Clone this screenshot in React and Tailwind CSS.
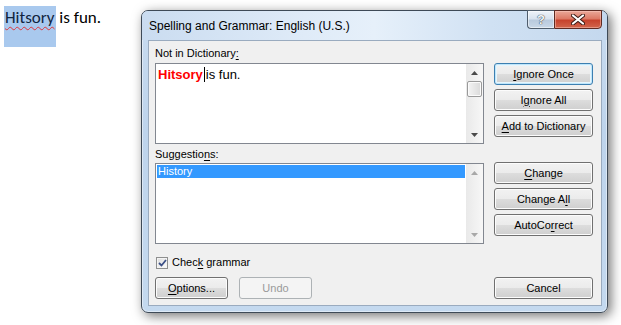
import React from 'react';

const ui = "font-['Segoe_UI','Liberation_Sans',Arial,sans-serif]";

const Button = ({ children, isDefault, disabled, className = '' }) => {
  const tone = disabled
    ? 'border-[#adb2b5] bg-[#f4f4f4] text-[#9a9a9a]'
    : isDefault
      ? 'border-[#3c7fb1] bg-[linear-gradient(#f2f2f2_0%,#ebebeb_50%,#dddddd_50%,#cfcfcf_100%)] text-black shadow-[inset_0_0_0_1px_#bfe6fb,inset_0_0_0_2px_#e6f5fd]'
      : 'border-[#707070] bg-[linear-gradient(#f2f2f2_0%,#ebebeb_50%,#dddddd_50%,#cfcfcf_100%)] text-black shadow-[inset_0_0_0_1px_#fcfcfc]';
  return (
    <div className={`h-[22px] flex items-center justify-center rounded-[3px] border text-[11px] leading-none ${tone} ${className}`}>
      {children}
    </div>
  );
};

const U = ({ children }) => <span className="underline underline-offset-[2px] decoration-1">{children}</span>;

const Arrow = ({ up, color }) => (
  <div className="h-[17px] flex items-center justify-center">
    <svg width="7" height="4" viewBox="0 0 7 4">
      <path d={up ? 'M0 4 L3.5 0 L7 4 Z' : 'M0 0 L7 0 L3.5 4 Z'} fill={color} />
    </svg>
  </div>
);

const ScrollBar = ({ thumb, disabled }) => {
  const color = disabled ? '#a8a8a8' : '#4a4a4a';
  return (
    <div className="w-[17px] h-full flex flex-col bg-[linear-gradient(90deg,#e9e9e9,#f7f7f7)]">
      <Arrow up color={color} />
      {thumb && (
        <div className="h-[16px] mx-px rounded-[2px] border border-[#9a9a9a] bg-[linear-gradient(90deg,#f4f4f4,#dadada)] shadow-[inset_0_0_0_1px_#fbfbfb]" />
      )}
      <div className="flex-1" />
      <Arrow color={color} />
    </div>
  );
};

export default function App() {
  return (
    <div className="w-[621px] h-[325px] bg-white flex overflow-hidden">
      {/* document text */}
      <div className="w-[141px] shrink-0 pl-[4px] pt-[6px] font-['Calibri','Liberation_Sans',sans-serif] text-[17px] leading-[18px] text-black">
        <span className="inline-block h-[41px] bg-[#a9c9ee] px-px pt-[3px] align-top text-[#10243e] underline decoration-wavy decoration-[#e0343a] decoration-1 underline-offset-[3px]">
          Hitsory
        </span>
        <span className="inline-block pt-[3px] align-top">&nbsp;is fun.</span>
      </div>

      {/* dialog window */}
      <div className={`${ui} mt-[10px] w-[467px] h-[303px] shrink-0 flex flex-col rounded-[7px] border border-[#3e4a57] bg-[linear-gradient(#c9dcf0,#bed4ec_40%,#c4d9ef)] shadow-[3px_3px_12px_rgba(0,0,0,0.55),inset_0_0_0_1px_rgba(255,255,255,0.45)]`}>
        {/* title bar */}
        <div className="h-[29px] flex justify-between rounded-t-[6px] bg-[linear-gradient(90deg,#cadcf0,#dfebf8_35%,#e6f0fa_50%,#d0e1f3_75%,#c4d8ee)]">
          <div className="self-center pl-[7px] text-[12px] text-black">Spelling and Grammar: English (U.S.)</div>
          <div className="flex mr-[5px] h-[19px] -mt-px">
            <div className="w-[27px] h-full flex items-center justify-center rounded-bl-[4px] border border-[#4f5d6c] border-r-0 bg-[linear-gradient(#eef3f9_0%,#d8e3ef_45%,#b9cadd_55%,#c9d8e8_100%)] shadow-[inset_0_0_0_1px_rgba(255,255,255,0.5)]">
              <span className="font-['Liberation_Sans',sans-serif] text-[13px] font-bold leading-none text-[#f4f6f8] [text-shadow:0_0_1px_#2c3540,0_0_1px_#2c3540]">?</span>
            </div>
            <div className="w-[48px] h-full flex items-center justify-center rounded-br-[4px] border border-[#5e2a22] bg-[linear-gradient(#eaa899_0%,#dd7a66_45%,#c7432d_55%,#d1654c_100%)] shadow-[inset_0_0_0_1px_rgba(255,210,200,0.45)]">
              <svg width="14" height="11" viewBox="0 0 14 11">
                <path d="M2 1.5 L12 9.5 M12 1.5 L2 9.5" stroke="#3a1a14" strokeWidth="4" strokeLinecap="round" />
                <path d="M2 1.5 L12 9.5 M12 1.5 L2 9.5" stroke="#ffffff" strokeWidth="2.2" strokeLinecap="round" />
              </svg>
            </div>
          </div>
        </div>

        {/* client area */}
        <div className="ml-[6px] mr-[5px] h-[266px] border border-[#9aabbf] bg-[#f0f0f0] pl-[6px] text-[11px] text-black">
          <div className="flex gap-[10px]">
            {/* left column */}
            <div className="w-[329px] flex flex-col">
              <div className="h-[22px] pt-[4px] leading-[16px]">
                Not in Dictionary<U>:</U>
              </div>
              <div className="h-[81px] flex border border-[#828790] bg-white">
                <div className="flex-1 pl-[2px] pt-[3px] font-['Liberation_Sans',Arial,sans-serif] text-[13px] leading-[16px]">
                  <span className="font-bold text-[#ff0000]">Hitsory</span>
                  <span className="inline-block w-px h-[15px] bg-black align-[-3px] mx-[1px]" />
                  <span>is fun.</span>
                </div>
                <ScrollBar thumb />
              </div>
              <div className="h-[19px] pt-[2px] leading-[16px]">
                Suggestio<U>n</U>s:
              </div>
              <div className="h-[81px] flex border border-[#828790] bg-white">
                <div className="flex-1 p-px">
                  <div className="h-[13px] bg-[#3399ff] pl-px leading-[13px] text-white">History</div>
                </div>
                <ScrollBar disabled />
              </div>
            </div>

            {/* right column */}
            <div className="w-[99px] flex flex-col pt-[22px]">
              <Button isDefault><U>I</U>gnore Once</Button>
              <Button className="mt-[4px]">I<U>g</U>nore All</Button>
              <Button className="mt-[4px]"><U>A</U>dd to Dictionary</Button>
              <Button className="mt-[25px]"><U>C</U>hange</Button>
              <Button className="mt-[4px]">Change A<U>l</U>l</Button>
              <Button className="mt-[4px]">AutoCo<U>r</U>rect</Button>
            </div>
          </div>

          {/* check grammar */}
          <div className="mt-[12px] h-[13px] flex items-center pl-px">
            <div className="w-[12px] h-[12px] flex items-center justify-center border border-[#8e8f8f] bg-[linear-gradient(135deg,#dcdcdc,#fdfdfd)] shadow-[inset_0_0_0_1px_#f4f4f4]">
              <svg width="9" height="8" viewBox="0 0 9 8">
                <path d="M1 4 L3.5 6.5 L8 1" fill="none" stroke="#3b4f86" strokeWidth="1.8" />
              </svg>
            </div>
            <span className="ml-[4px]">Chec<U>k</U> grammar</span>
          </div>

          {/* bottom buttons */}
          <div className="mt-[8px] flex">
            <Button className="w-[73px]"><U>O</U>ptions...</Button>
            <Button disabled className="w-[73px] ml-[11px]">Undo</Button>
            <Button className="w-[99px] ml-[182px]">Cancel</Button>
          </div>
        </div>
      </div>
    </div>
  );
}
